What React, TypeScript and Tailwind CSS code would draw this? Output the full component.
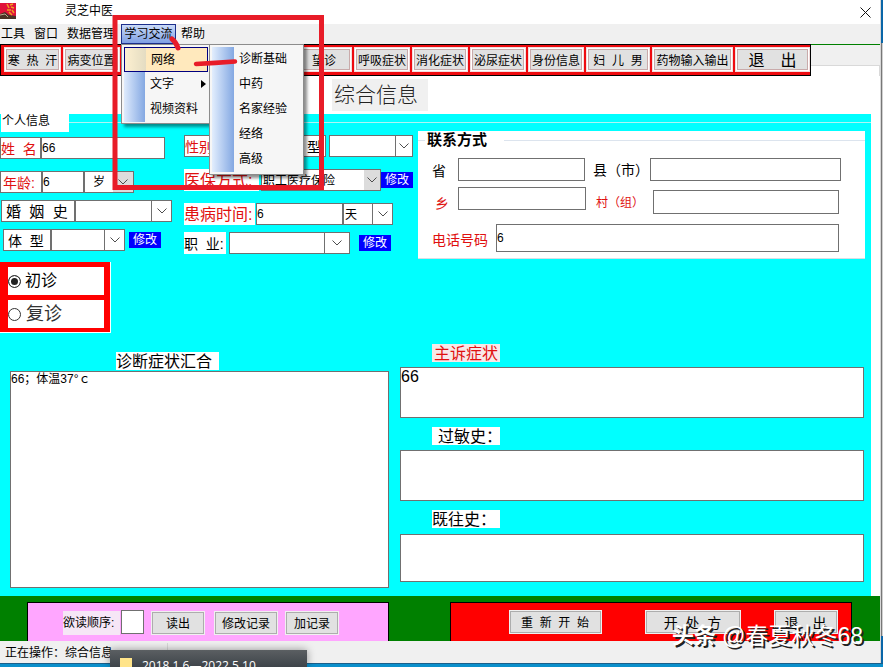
import React from "react";

const SP = "\u00a0\u00a0";

function Chevron() {
  return (
    <svg width="10" height="6" viewBox="0 0 10 6" fill="none" stroke="#4d4d4d" strokeWidth="1">
      <path d="M0.5 0.5 L5 5 L9.5 0.5" />
    </svg>
  );
}

function Combo({
  id,
  className,
  arrow = "",
  value = "",
  label,
}: {
  id: string;
  className: string;
  arrow?: string;
  value?: string;
  label?: string;
}) {
  return (
    <span className={"relative flex h-[22px] border border-[#707070] bg-white " + className}>
      <select
        id={id}
        aria-label={label}
        defaultValue={value}
        className="h-full w-full appearance-none bg-transparent pt-0.5 pl-px text-xs outline-none"
      >
        <option value={value}>{value}</option>
      </select>
      <span
        className={
          "pointer-events-none absolute inset-y-0 right-0 flex w-5 items-center justify-center " + arrow
        }
      >
        <Chevron />
      </span>
    </span>
  );
}

function SmallButton({ className = "" }: { className?: string }) {
  return (
    <button className={"h-4 w-8 shrink-0 bg-[#0000ff] text-xs leading-4 text-white " + className}>修改</button>
  );
}

const TAG = "flex h-[22px] shrink-0 items-center bg-white pt-0.5 whitespace-pre leading-5 ";
const BOX = "border border-[#707070] bg-white outline-none ";

function ToolButton({ children, className = "w-14" }: { children: React.ReactNode; className?: string }) {
  return (
    <button className={"h-[25px] shrink-0 border border-[#f3dcdc] bg-white p-px text-xs " + className}>
      <span className="flex h-full w-full items-center justify-center border border-[#c9aaaa] bg-[#e1e1e1] pt-0.5 whitespace-pre">
        {children}
      </span>
    </button>
  );
}

function ActionButton({ children, className }: { children: React.ReactNode; className: string }) {
  return (
    <button className={"h-6 shrink-0 border border-[#f0f0f0] bg-[#e1e1e1] whitespace-pre " + className}>
      <span className="flex h-full w-full items-center justify-center border border-[#adadad] pt-0.5">{children}</span>
    </button>
  );
}

function MenuBar() {
  return (
    <nav className="relative z-20 flex h-5 items-stretch bg-[#f0f0f0] text-xs leading-[18px]">
      <button className="ml-px w-6">工具</button>
      <button className="ml-[9px] w-6">窗口</button>
      <button className="ml-[9px] w-12 whitespace-nowrap">数据管理</button>
      <div className="relative ml-1.5">
        <button className="h-5 w-[55px] border border-[#1c2f8c] bg-linear-to-b from-[#c9daf8] to-[#7f9fe3] whitespace-nowrap">
          学习交流
        </button>
        <div className="absolute top-5 left-0 h-[80px] w-[90px] border border-[#8c8c8c] bg-[#f6f6f6] p-0.5 shadow-[3px_3px_3px_rgba(0,0,0,0.45)]">
          {["网络", "文字", "视频资料"].map((name, i) => (
            <button
              key={name}
              className={
                "flex h-[25px] w-full items-stretch text-left leading-[25px] " +
                (i === 0 ? "border border-[#000080] bg-[#ffe9bd] leading-[23px]" : "")
              }
            >
              <span
                className={
                  "w-[21px] shrink-0 bg-linear-to-r " +
                  (i === 0 ? "from-[#fdf0d0] to-[#e4dcc2]" : "from-[#dfebfc] to-[#84a8e2]")
                }
              />
              <span className="ml-[5px] flex-1 whitespace-nowrap">{name}</span>
              {i === 1 && (
                <svg width="5" height="8" viewBox="0 0 5 8" className="mt-2 mr-0.5">
                  <path d="M0 0 L5 4 L0 8 Z" />
                </svg>
              )}
            </button>
          ))}
        </div>
        <div className="absolute top-5 left-[88px] w-[95px] border border-[#8c8c8c] bg-[#f6f6f6] p-0.5 shadow-[3px_3px_3px_rgba(0,0,0,0.45)]">
          {["诊断基础", "中药", "名家经验", "经络", "高级"].map((name) => (
            <button key={name} className="flex h-[25px] w-full items-stretch text-left leading-[25px]">
              <span className="w-[22px] shrink-0 bg-linear-to-r from-[#e3eefd] to-[#84a8e2]" />
              <span className="ml-[5px] whitespace-nowrap">{name}</span>
            </button>
          ))}
        </div>
      </div>
      <button className="ml-[5px] w-6">帮助</button>
    </nav>
  );
}

function Toolbar() {
  return (
    <div className="flex h-8 border-t border-[#008000]">
      <div className="-mt-px flex h-8 w-[811px] shrink-0 gap-0.5 border border-black bg-[#ee0a0f] pt-0.5 pl-[3px]">
        <ToolButton className="w-[57px]">寒{SP}热{SP}汗</ToolButton>
        <ToolButton className="w-[57px]">病变位置</ToolButton>
        <ToolButton className="ml-[174px] w-14">望诊</ToolButton>
        <ToolButton>呼吸症状</ToolButton>
        <ToolButton>消化症状</ToolButton>
        <ToolButton>泌尿症状</ToolButton>
        <ToolButton>身份信息</ToolButton>
        <ToolButton className="w-[64px]">妇{SP}儿{SP}男</ToolButton>
        <ToolButton className="w-[81px]">药物输入输出</ToolButton>
        <ToolButton className="w-[75px]">
          <span className="text-base">退{"\u3000"}出</span>
        </ToolButton>
      </div>
      <div className="flex-1 bg-[#f0f0f0] pt-5">
        <div className="h-[11px] border-t border-r border-[#d9d9d9] bg-white" />
      </div>
    </div>
  );
}

function PersonColumn() {
  return (
    <div className="w-[184px] shrink-0 pt-[5px]">
      <div className="flex">
        <label htmlFor="name" className={TAG + "w-[41px] border border-[#707070] text-sm text-[#e01010]"}>
          姓{SP}名
        </label>
        <input id="name" defaultValue="66" className={BOX + "h-[22px] w-[124px] text-xs"} />
      </div>
      <div className="mt-3 flex">
        <label htmlFor="age" className={TAG + "w-[42px] border border-[#707070] pl-0.5 text-sm text-[#e01010]"}>
          年龄:
        </label>
        <input id="age" defaultValue="6" className={BOX + "h-[22px] w-[42px] text-xs"} />
        <span className="relative flex h-[22px] w-[50px] border border-[#707070] bg-white">
          <select aria-label="岁" className="w-full appearance-none pl-2 text-xs outline-none">
            <option>岁</option>
          </select>
          <span className="pointer-events-none absolute inset-y-0 right-0 flex w-5 items-center justify-center bg-[#dcdcdc]">
            <Chevron />
          </span>
        </span>
      </div>
      <div className="mt-[7px] flex pl-px">
        <label htmlFor="marriage" className={TAG + "w-[74px] border border-[#707070] pl-1 text-[15px]"}>
          婚{SP}姻{SP}史
        </label>
        <Combo id="marriage" className="w-[97px]" arrow="border-l border-[#707070]" />
      </div>
      <div className="mt-[7px] flex items-center pl-[3px]">
        <label htmlFor="build" className={TAG + "w-12 border border-[#707070] pl-1 text-sm"}>
          体{SP}型
        </label>
        <Combo id="build" className="w-[74px]" arrow="border-l border-[#707070]" />
        <SmallButton className="ml-1" />
      </div>
      <div className="mt-[11px] flex h-[71px] w-[111px] flex-col gap-[5px] border-r border-b border-white bg-[#ff0000] pt-[5px] pl-2">
        <label className="flex h-7 w-24 items-center gap-1 bg-white text-base">
          <Radio checked />
          初诊
        </label>
        <label className="flex h-7 w-24 items-center gap-[5px] bg-white text-lg text-[#333]">
          <Radio />
          复诊
        </label>
      </div>
    </div>
  );
}

function Radio({ checked = false }: { checked?: boolean }) {
  return (
    <input
      type="radio"
      name="visit"
      defaultChecked={checked}
      className="size-[13px] shrink-0 appearance-none rounded-full border border-[#333] bg-white checked:bg-[#222] checked:shadow-[inset_0_0_0_2px_white]"
    />
  );
}

function ConditionColumn() {
  return (
    <div className="w-[234px] shrink-0 pt-[3px]">
      <div className="flex">
        <label htmlFor="kind" className={TAG + "w-[142px] justify-between border border-[#707070] pr-1 text-sm"}>
          <span className="text-[#e01010]">性别</span>
          <span>型</span>
        </label>
        <Combo id="kind" className="ml-[3px] w-[84px]" arrow="w-[17px] border-l border-[#707070]" />
      </div>
      <div className="mt-3 flex items-center">
        <label htmlFor="insurance" className={TAG + "w-[75px] text-base text-[#e01010]"}>
          医保方式:
        </label>
        <Combo id="insurance" className="ml-0.5 w-[120px]" arrow="bg-[#dcdcdc] max-w-4" value="职工医疗保险" />
        <SmallButton />
      </div>
      <div className="mt-3 flex">
        <label htmlFor="duration" className={TAG + "w-[71px] text-base text-[#e01010]"}>
          患病时间:
        </label>
        <input id="duration" defaultValue="6" className={BOX + "ml-px h-[22px] w-[87px] text-xs"} />
        <Combo id="unit" label="单位" className="w-[50px]" arrow="border-l border-[#707070]" value="天" />
      </div>
      <div className="mt-[7px] flex items-center">
        <label htmlFor="job" className={TAG + "w-[42px] text-sm"}>
          职{SP}业:
        </label>
        <Combo id="job" className="ml-[3px] w-[121px]" arrow="min-w-[25px] border-l border-[#707070]" />
        <SmallButton className="ml-[9px]" />
      </div>
    </div>
  );
}

function ContactGroup() {
  return (
    <section className="-mt-px mr-1.5 h-[128px] min-w-0 flex-1 border-b border-[#d5dfe5] bg-white text-sm">
      <div className="flex h-[26px] items-start">
        <span className="mt-[9px] w-[7px] border-t border-[#dce4ee]" />
        <h2 className="w-[79px] pl-0.5 text-[15px] leading-[18px] font-bold">联系方式</h2>
        <span className="mt-[9px] flex-1 border-t border-[#dce4ee]" />
      </div>
      <div className="flex items-center pr-6 pl-3.5">
        <label htmlFor="province" className="w-[26px] pt-1">省</label>
        <input id="province" className={BOX + "h-[23px] w-[127px]"} />
        <label htmlFor="county" className="ml-2 w-[57px] pt-0.5 whitespace-nowrap">县（市）</label>
        <input id="county" className={BOX + "h-[23px] min-w-0 flex-1"} />
      </div>
      <div className="mt-1.5 flex h-[27px] items-start pr-[26px] pl-3.5">
        <label htmlFor="town" className="w-[26px] pt-1.5 pl-[3px] text-[#e01010]">乡</label>
        <input id="town" className={BOX + "h-[23px] w-[128px]"} />
        <label htmlFor="village" className="ml-2 w-[59px] pt-1.5 pl-0.5 text-xs leading-5 whitespace-nowrap text-[#e01010]">
          村（组）
        </label>
        <input id="village" className={BOX + "h-6 min-w-0 flex-1 self-end"} />
      </div>
      <div className="mt-2.5 flex items-center pr-[26px] pl-3.5">
        <label htmlFor="phone" className="w-16 pt-1 text-[#e01010]">电话号码</label>
        <input id="phone" defaultValue="6" className={BOX + "h-7 min-w-0 flex-1 text-xs"} />
      </div>
    </section>
  );
}

function History() {
  const label = "block h-[18px] w-[68px] ml-8 text-base leading-5 whitespace-nowrap ";
  const area = BOX + "block w-full resize-none text-base leading-[18px] ";
  return (
    <div className="min-w-0 flex-[464] pt-[11px]">
      <label htmlFor="complaint" className={label + "bg-[#f8e8e8] pl-0.5 text-[#e01010]"}>主诉症状</label>
      <textarea id="complaint" defaultValue="66" className={area + "mt-[5px] h-[51px]"} />
      <label htmlFor="allergy" className={label + "mt-[9px] bg-white pl-1.5"}>过敏史：</label>
      <textarea id="allergy" className={area + "mt-[5px] h-[51px]"} />
      <label htmlFor="past" className={label + "mt-[9px] bg-white"}>既往史：</label>
      <textarea id="past" className={area + "mt-1.5 h-12"} />
    </div>
  );
}

function Annotation() {
  return (
    <svg
      className="pointer-events-none absolute top-0 left-0 z-30"
      width="330"
      height="195"
      viewBox="0 0 330 195"
      fill="none"
      stroke="#e81c28"
      strokeWidth="5"
      aria-hidden="true"
    >
      <rect x="115" y="17.5" width="206.5" height="170" />
      <path d="M172 39 Q176 42 178 48" strokeLinecap="round" />
      <path d="M196 64 Q215 63 235 61.500" strokeWidth="4.500" strokeLinecap="round" />
    </svg>
  );
}

export default function App() {
  return (
    <div className="relative flex min-h-screen w-full flex-col overflow-hidden bg-[#0b8fcb] font-['Liberation_Sans','Noto_Sans_CJK_SC',sans-serif] text-black">
      <div className="flex flex-1">
        <div className="flex min-w-0 flex-1 flex-col bg-white">
          <header className="flex h-6 items-center">
            <svg width="16" height="16" viewBox="0 0 16 16" className="-mt-0.5">
              <rect width="16" height="16" fill="#e0123a" />
              <path d="M0 11 L5 9 L9 12 L16 13 V16 H0 Z" fill="#4a3326" />
              <path d="M0 12 L5 11 L8 14" stroke="#b8a58d" fill="none" />
              <path d="M7 1 L9 5 M10 2 L13 1 M11 4 L14 5 M7 7 H11 M12 7 L14 10 M9 9 L12 12" stroke="#f0a020" strokeWidth="1.500" />
            </svg>
            <h1 className="ml-[49px] flex-1 pb-0.5 text-xs">灵芝中医</h1>
            <button aria-label="关闭" className="mr-[9px]">
              <svg width="11" height="11" viewBox="0 0 11 11" stroke="#111" strokeWidth="1">
                <path d="M0.5 0.5 L10.5 10.5 M10.5 0.5 L0.5 10.5" />
              </svg>
            </button>
          </header>
          <MenuBar />
          <Toolbar />
          <div className="flex h-[38px] pt-[3px]">
            <h2 className="ml-[332px] h-8 w-24 bg-[#f0f0f0] pl-0.5 text-[21px] leading-8 font-light whitespace-nowrap text-[#222]">
              综合信息
            </h2>
          </div>
          <main className="mr-[9px] flex flex-1 flex-col bg-[#00ffff]">
            <div className="flex h-[18px]">
              <h3 className="ml-px w-[68px] bg-white pl-px text-xs leading-[14px]">个人信息</h3>
              <div className="mt-2 flex-1 border-t border-[#b0f4f4]" />
            </div>
            <div className="flex">
              <PersonColumn />
              <ConditionColumn />
              <ContactGroup />
            </div>
            <div className="flex flex-1 gap-[11px] pr-[7px] pl-2.5">
              <div className="flex min-w-0 flex-[379] flex-col pt-[19px] pb-2">
                <label htmlFor="summary" className="mb-px ml-[106px] h-[18px] w-[103px] bg-white text-base leading-5">
                  诊断症状汇合
                </label>
                <textarea
                  id="summary"
                  defaultValue="66；体温37°ｃ"
                  className={BOX + "w-full flex-1 resize-none text-xs leading-[14px]"}
                />
              </div>
              <History />
            </div>
          </main>
          <footer>
            <div className="grid h-[45px] grid-cols-[minmax(0,362fr)_minmax(0,403fr)] gap-x-[61px] bg-[#008000] pt-1.5 pr-7 pl-[27px]">
              <div className="flex border-x border-t border-black bg-[#ffa6ff] pt-[7px] pl-[35px] text-xs">
                <label htmlFor="order" className="mt-px h-6 w-[57px] shrink-0 bg-[#f6e6f6] leading-6 whitespace-nowrap">
                  欲读顺序:
                </label>
                <input id="order" className={BOX + "ml-px h-6 w-[23px]"} />
                <ActionButton className="mt-px ml-[7px] w-[54px]">读出</ActionButton>
                <ActionButton className="mt-px ml-[9px] w-[64px]">修改记录</ActionButton>
                <ActionButton className="mt-px ml-[7px] w-[54px]">加记录</ActionButton>
              </div>
              <div className="flex border-x border-t border-black bg-[#ff0000] pt-[7px] pl-[58px]">
                <ActionButton className="w-[93px] text-xs">重{SP}新{SP}开{SP}始</ActionButton>
                <ActionButton className="ml-[43px] w-24 text-sm">开{SP}处{SP}方</ActionButton>
                <ActionButton className="ml-[33px] w-16 text-sm">退{"\u3000"}出</ActionButton>
              </div>
            </div>
            <div className="flex h-[22px] items-center bg-[#f0f0f0] pt-0.5 pl-[5px] text-xs">
              <span className="w-[162px]">正在操作：综合信息</span>
              <span className="h-5 border-l border-[#d8d8d8]" />
            </div>
          </footer>
        </div>
        <div className="flex w-[3px] flex-col border-l border-[#d8d8d8]">
          <div className="h-[43px] bg-[#0a66a8]" />
          <div className="flex-1 border-l border-[#777] bg-[#d0d0d0]" />
          <div className="h-[27px] bg-[#0a66a8]" />
        </div>
      </div>
      <div className="h-1 border-t border-[#1b5f8a]" />

      <div className="absolute bottom-0 left-[110px] z-10 flex h-[17px] w-[197px] items-start overflow-hidden bg-linear-to-b from-[#5b5f62] to-[#3e444a] pt-[7px] pl-2.5 text-white shadow-[0_0_8px_rgba(0,0,0,0.4)]">
        <span className="mt-px h-3 w-3 shrink-0 bg-[#ffe48a]" />
        <span className="ml-2.5 font-['Open_Sans','Noto_Sans_CJK_SC',sans-serif] text-xs leading-[17px] whitespace-nowrap">
          2018.1.6—2022.5.10
        </span>
      </div>
      <div className="absolute right-5 bottom-[17px] z-10 flex items-center gap-1.5 text-[23px] leading-7 whitespace-nowrap text-white [text-shadow:2px_2px_0_#222]">
        <b className="text-[22px]">头条</b>
        <span>@春夏秋冬68</span>
      </div>
      <Annotation />
    </div>
  );
}
